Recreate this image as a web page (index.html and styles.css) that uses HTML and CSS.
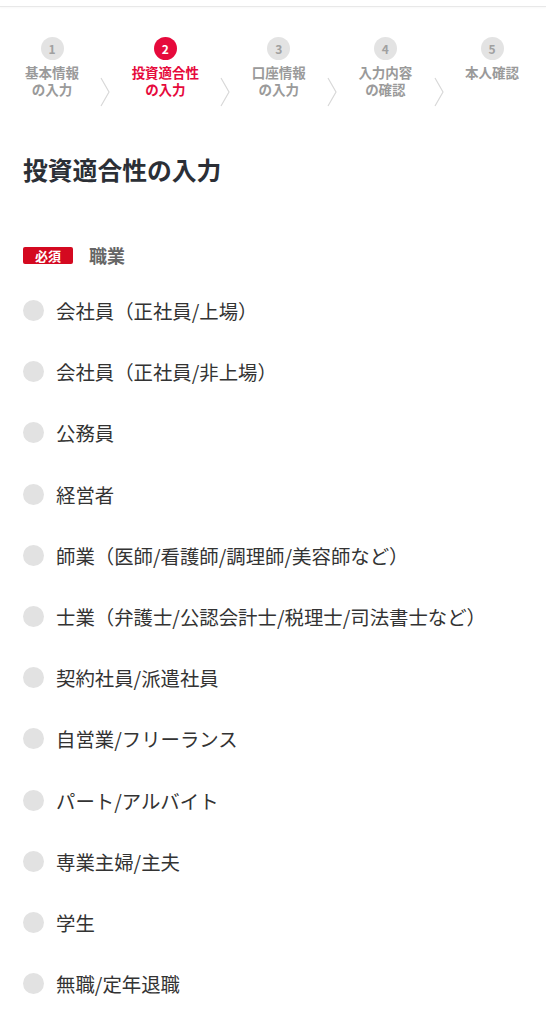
FILE: index.html
```html
<!DOCTYPE html>
<html lang="ja">
<head>
    <meta charset="UTF-8">
    <meta name="viewport" content="width=device-width, initial-scale=1.0">
    <title>投資適合性の入力</title>
    <link rel="stylesheet" href="styles.css">
</head>
<body>

    <div class="topbar"></div>

    <!-- ステップ -->
    <div class="steps">
        <div class="step">
            <span class="num">1</span>
            <span class="label">基本情報<br>の入力</span>
        </div>
        <svg class="arrow" viewBox="0 0 10 30"><polyline points="1,1 9,15 1,29" /></svg>
        <div class="step active">
            <span class="num">2</span>
            <span class="label">投資適合性<br>の入力</span>
        </div>
        <svg class="arrow" viewBox="0 0 10 30"><polyline points="1,1 9,15 1,29" /></svg>
        <div class="step">
            <span class="num">3</span>
            <span class="label">口座情報<br>の入力</span>
        </div>
        <svg class="arrow" viewBox="0 0 10 30"><polyline points="1,1 9,15 1,29" /></svg>
        <div class="step">
            <span class="num">4</span>
            <span class="label">入力内容<br>の確認</span>
        </div>
        <svg class="arrow" viewBox="0 0 10 30"><polyline points="1,1 9,15 1,29" /></svg>
        <div class="step">
            <span class="num">5</span>
            <span class="label">本人確認</span>
        </div>
    </div>

    <h1 class="title">投資適合性の入力</h1>

    <!-- 職業 -->
    <div class="field">
        <div class="field-head">
            <span class="required">必須</span>
            <span class="field-name">職業</span>
        </div>
        <ul class="radios">
            <li><span class="dot"></span>会社員（正社員/上場）</li>
            <li><span class="dot"></span>会社員（正社員/非上場）</li>
            <li><span class="dot"></span>公務員</li>
            <li><span class="dot"></span>経営者</li>
            <li><span class="dot"></span>師業（医師/看護師/調理師/美容師など）</li>
            <li><span class="dot"></span>士業（弁護士/公認会計士/税理士/司法書士など）</li>
            <li><span class="dot"></span>契約社員/派遣社員</li>
            <li><span class="dot"></span>自営業/フリーランス</li>
            <li><span class="dot"></span>パート/アルバイト</li>
            <li><span class="dot"></span>専業主婦/主夫</li>
            <li><span class="dot"></span>学生</li>
            <li><span class="dot"></span>無職/定年退職</li>
        </ul>
    </div>

</body>
</html>
```

FILE: styles.css
```css
body {
    margin: 0;
    font-family: "Noto Sans CJK JP", "Noto Sans", sans-serif;
    color: #333;
    background: #fff;
}
.topbar {
    height: 6px;
    border-bottom: 1px solid #e8e8e8;
    box-shadow: 0 1px 2px rgba(0, 0, 0, 0.03);
}
/* ステップ */
.steps {
    display: flex;
    justify-content: space-between;
    align-items: flex-start;
    padding: 30px 27px 0 25px;
}
.step {
    display: flex;
    flex-direction: column;
    align-items: center;
}
.step .num {
    width: 23px;
    height: 23px;
    border-radius: 50%;
    background: #e3e3e3;
    color: #a0a0a0;
    font-size: 12px;
    font-weight: bold;
    line-height: 23px;
    text-align: center;
}
.step .label {
    margin-top: 4px;
    font-size: 13.5px;
    font-weight: bold;
    line-height: 17px;
    color: #9a9a9a;
    text-align: center;
}
.step.active .num {
    background: #e60a3c;
    color: #fff;
}
.step.active .label {
    color: #e60a3c;
}
.arrow {
    width: 10px;
    height: 30px;
    margin-top: 40px;
    fill: none;
    stroke: #d8d8d8;
    stroke-width: 1.2;
}
.title {
    margin: 46px 0 0 23px;
    font-size: 24.8px;
    font-weight: bold;
    line-height: 32px;
    color: #2b2f36;
}
/* 職業 */
.field {
    padding: 0 23px;
}
.field-head {
    display: flex;
    align-items: center;
    margin-top: 57px;
}
.required {
    width: 50px;
    height: 17px;
    border-radius: 2px;
    background: #d40920;
    color: #fff;
    font-size: 13px;
    font-weight: bold;
    line-height: 17px;
    text-align: center;
}
.field-name {
    margin-left: 16px;
    font-size: 18px;
    font-weight: bold;
    color: #666;
}
.radios {
    list-style: none;
    margin: 12px 0 0 0;
    padding: 0;
}
.radios li {
    display: flex;
    align-items: center;
    height: 61.2px;
    font-size: 19.4px;
    color: #333;
}
.dot {
    width: 21px;
    height: 21px;
    border-radius: 50%;
    background: #e2e2e2;
    margin-right: 12px;
}
```
